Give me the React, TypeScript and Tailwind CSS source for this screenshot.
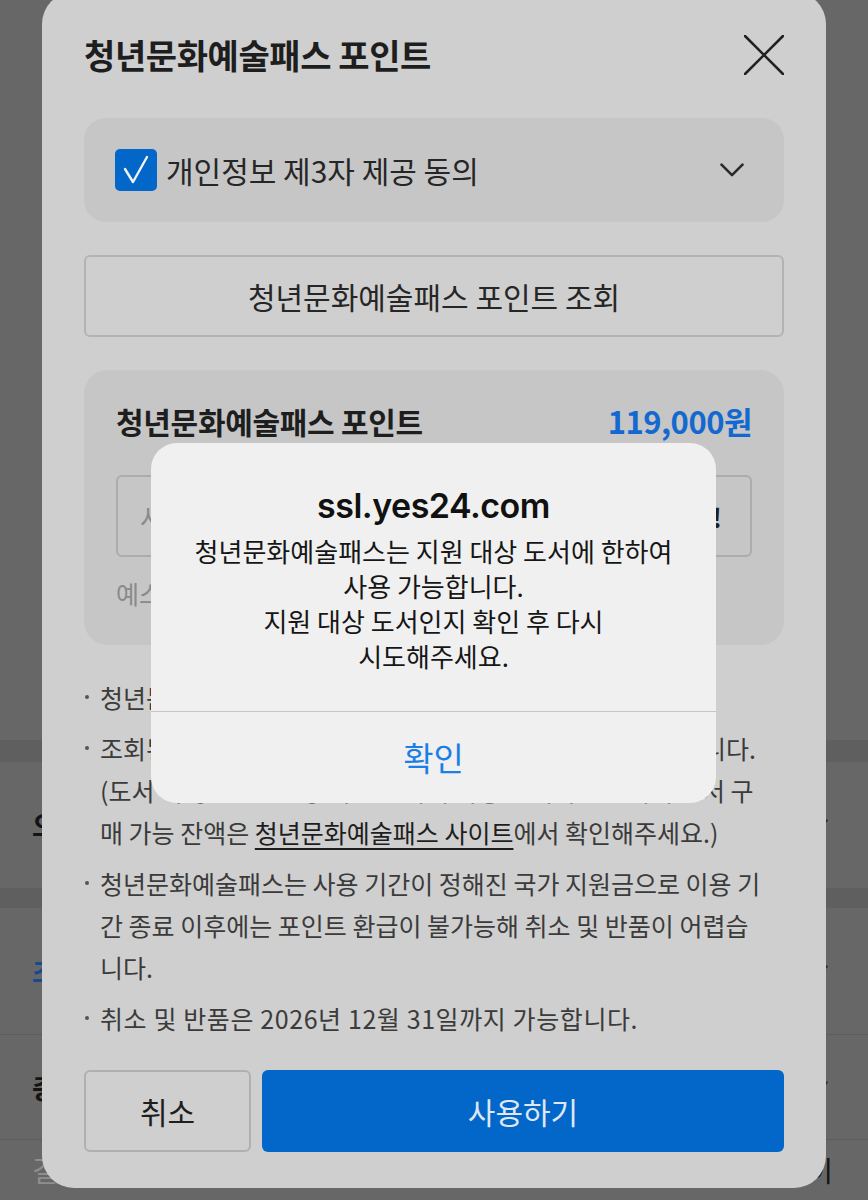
const KR = "font-['Noto_Sans_CJK_KR',sans-serif]";

function CloseIcon() {
  return (
    <svg width="40" height="40" viewBox="0 0 40 40" fill="none">
      <path d="M1 1L39 39M39 1L1 39" stroke="#222" strokeWidth="2.6" strokeLinecap="round" />
    </svg>
  );
}

function ChevronDown({ color = "#2a2a2a", size = 24 }: { color?: string; size?: number }) {
  return (
    <svg width={size} height={size * 0.6} viewBox="0 0 24 14" fill="none">
      <path d="M1.5 1.5L12 12L22.5 1.5" stroke={color} strokeWidth="2.6" strokeLinecap="round" strokeLinejoin="round" />
    </svg>
  );
}

function Checkbox() {
  return (
    <div className="flex size-[42px] shrink-0 items-center justify-center rounded-[5px] bg-[#0366c9]">
      <svg width="42" height="42" viewBox="0 0 42 42" fill="none">
        <path d="M10 20L18 33L32 8" stroke="#f2f2f2" strokeWidth="2.4" strokeLinecap="round" strokeLinejoin="round" />
      </svg>
    </div>
  );
}

// 배경 페이지 (모달 뒤에 깔린 주문서 화면, 딤 처리된 색)
function BackgroundPage() {
  return (
    <div className="flex min-h-[1200px] flex-col bg-[#676767]">
      <div className="h-[740px]" />
      <div className="h-[22px] bg-[#5f5f5f]" />
      <div className="flex h-[126px] items-center justify-between pl-[32px] pr-[40px]">
        <span className="text-[28px] font-bold text-[#141414]">오늘 도착 보장</span>
        <ChevronDown color="#2a2a2a" size={20} />
      </div>
      <div className="h-[20px] bg-[#5f5f5f]" />
      <div className="flex h-[127px] items-center justify-between border-b border-[#5d5d5d] pl-[32px] pr-[40px]">
        <span className="text-[28px] font-bold text-[#164a8f]">초특가 할인 쿠폰</span>
        <ChevronDown color="#2a2a2a" size={20} />
      </div>
      <div className="flex h-[105px] items-center justify-between border-b border-[#5d5d5d] pl-[32px] pr-[40px]">
        <span className="text-[28px] font-bold text-[#141414]">총 결제금액</span>
        <ChevronDown color="#2a2a2a" size={20} />
      </div>
      <div className="flex h-[60px] items-center justify-between pl-[32px] pr-[35px]">
        <span className="text-[28px] text-[#8e8e8e]">결제수단</span>
        <span className="text-[28px] text-[#141414]">YES페이</span>
      </div>
    </div>
  );
}

function Bullet({ children }: { children: React.ReactNode }) {
  return (
    <li className="relative whitespace-nowrap pl-[16px] text-[25px] leading-[42px] text-[#3b3b3b]">
      <span className="absolute left-[1px] top-[19px] size-[4px] rounded-full bg-[#555]" />
      {children}
    </li>
  );
}

function PointSheet() {
  return (
    <div className="absolute left-[42px] top-[-8px] flex h-[1196px] w-[784px] flex-col rounded-[32px] bg-[#cfcfcf] px-[42px] pt-[43px]">
      {/* 헤더 */}
      <div className="flex h-[40px] items-center justify-between">
        <h2 className="text-[34px] font-bold leading-[40px] tracking-[-0.4px] text-[#1e1e1e]">청년문화예술패스 포인트</h2>
        <CloseIcon />
      </div>

      {/* 동의 */}
      <div className="mt-[43px] flex h-[104px] items-center rounded-[22px] bg-[#c6c6c6] pl-[31px] pr-[40px]">
        <Checkbox />
        <span className="ml-[9px] flex-1 text-[30px] text-[#262626]">개인정보 제3자 제공 동의</span>
        <ChevronDown />
      </div>

      {/* 조회 버튼 */}
      <button className="mt-[33px] flex h-[82px] items-center justify-center rounded-[6px] border-2 border-[#b3b3b3] text-[30px] text-[#262626]">
        청년문화예술패스 포인트 조회
      </button>

      {/* 포인트 */}
      <div className="mt-[33px] flex h-[275px] flex-col rounded-[24px] bg-[#c6c6c6] px-[32px] pt-[36px]">
        <div className="flex h-[30px] items-center justify-between">
          <span className="text-[30px] font-bold tracking-[-0.3px] text-[#1e1e1e]">청년문화예술패스 포인트</span>
          <span className="text-[31px] font-bold tracking-[-0.5px] text-[#1469cf]">119,000원</span>
        </div>
        <div className="mt-[39px] flex h-[82px] items-center justify-between rounded-[6px] border-2 border-[#acacac] pl-[22px] pr-[28px] text-[26px]">
          <span className="text-[#8a8a8a]">사용할 포인트 입력</span>
          <span className="font-bold text-[#1e1e1e]">전액사용!</span>
        </div>
        <p className="mt-[21px] text-[25px] leading-[30px] text-[#8a8a8a]">예스24 결제 시 1원 단위로 사용 가능</p>
      </div>

      {/* 안내 */}
      <ul className="mt-[31px] flex flex-col gap-[9px]">
        <Bullet>청년문화예술패스 포인트는 도서 구매에만 사용됩니다.</Bullet>
        <Bullet>
          조회된 포인트는 청년문화예술패스의 전체 잔액으로 표시됩니다.
          <br />
          (도서 외 공연·전시 등 다른 분야의 사용 금액이 포함되어 도서 구
          <br />
          매 가능 잔액은{" "}
          <span className="text-[#1e1e1e] underline decoration-[1.5px] underline-offset-[5px]">청년문화예술패스 사이트</span>
          에서 확인해주세요.)
        </Bullet>
        <Bullet>
          청년문화예술패스는 사용 기간이 정해진 국가 지원금으로 이용 기
          <br />
          간 종료 이후에는 포인트 환급이 불가능해 취소 및 반품이 어렵습
          <br />
          니다.
        </Bullet>
        <Bullet>
          <span className="tracking-[0.6px]">취소 및 반품은 2026년 12월 31일까지 가능합니다.</span>
        </Bullet>
      </ul>

      {/* 하단 버튼 */}
      <div className="mt-[31px] flex h-[82px] gap-[11px]">
        <button className="w-[167px] rounded-[6px] border-2 border-[#b0b0b0] text-[30px] text-[#1e1e1e]">취소</button>
        <button className="flex-1 rounded-[6px] bg-[#0366c9] text-[30px] text-[#dfe7f2]">사용하기</button>
      </div>
    </div>
  );
}

function SafariAlert() {
  return (
    <div className="absolute left-[151px] top-[443px] flex w-[565px] flex-col overflow-hidden rounded-[26px] bg-[#f0f0f0]">
      <div className="flex flex-col items-center px-[24px] pt-[43px] pb-[38px] text-center">
        <h3 className="font-['Inter','Noto_Sans_CJK_KR',sans-serif] text-[34px] font-semibold leading-[40px] tracking-[-0.5px] text-[#111]">
          ssl.yes24.com
        </h3>
        <p className="mt-[7px] whitespace-nowrap text-[26px] leading-[35px] text-[#161616]">
          청년문화예술패스는 지원 대상 도서에 한하여
          <br />
          사용 가능합니다.
          <br />
          지원 대상 도서인지 확인 후 다시
          <br />
          시도해주세요.
        </p>
      </div>
      <div className="h-px bg-[#c6c6c6]" />
      <button className="flex h-[91px] items-center justify-center text-[33px] text-[#1b7fe6]">확인</button>
    </div>
  );
}

export default function App() {
  return (
    <div className={`relative h-[1200px] w-[868px] overflow-hidden ${KR}`}>
      <BackgroundPage />
      <PointSheet />
      <SafariAlert />
    </div>
  );
}
